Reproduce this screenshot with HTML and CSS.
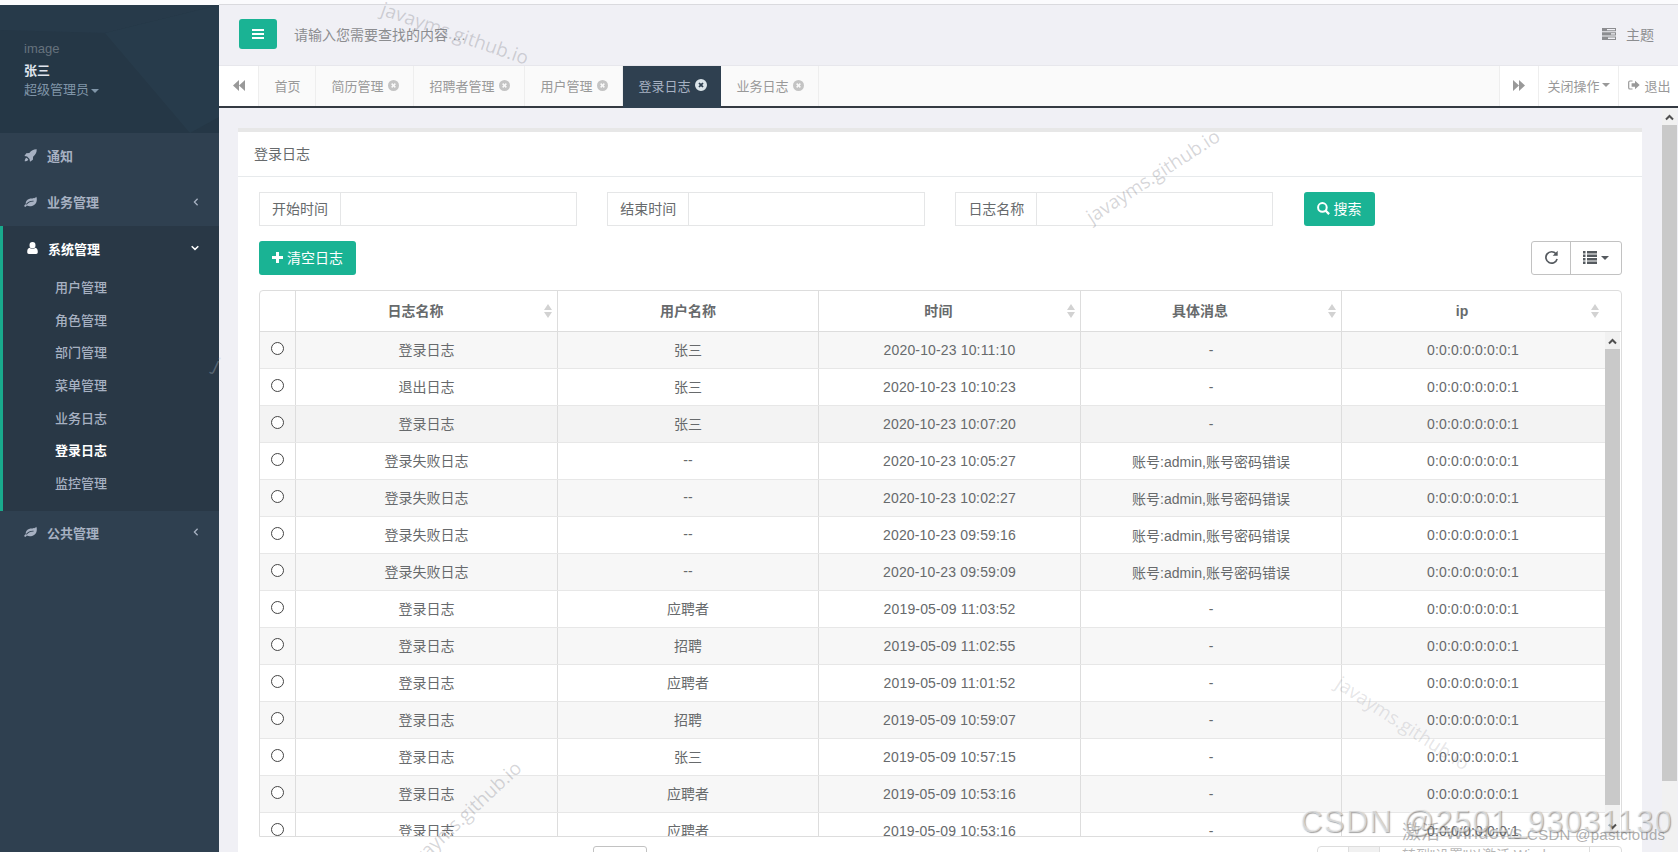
FILE: index.html
```
<!DOCTYPE html>
<html lang="zh-CN">
<head>
    <meta charset="UTF-8">
    <meta name="viewport" content="width=device-width, initial-scale=1.0">
    <title>登录日志</title>
    <link rel="stylesheet" href="styles.css">
</head>
<body>
    <!-- Shared icons -->
    <svg class="icon-defs" width="0" height="0">
        <symbol id="i-leaf" viewBox="0 0 14 12"><path fill-rule="evenodd" d="M13.2.3c.7 1.400.8 3.100.4 4.800-.8 3.600-4 5.500-7.200 5.500-1.300 0-2.300-.3-3.200-.7-.6.400-.9 1.300-1.700 1.400C.9 11.400.3 10.800.3 10.300c0-.9 1.500-1.500 1.600-2.100-.4-2.700 1.300-5.200 4.200-5.800 2.400-.5 5.700.1 7.100-2.100zM3 8.600C5 6.500 7 5.700 9.900 5.500c.7-.1.600-.9 0-.9C6.700 4.500 4.300 5.700 2.400 7.800c-.5.700.1 1.300.6.800z"/></symbol>
        <symbol id="i-close" viewBox="0 0 12 12"><path fill-rule="evenodd" d="M6 0a6 6 0 1 1 0 12A6 6 0 0 1 6 0zM3.400 4.600 4.800 6 3.400 7.400l1.200 1.200L6 7.200l1.400 1.400 1.200-1.200L7.200 6l1.400-1.400-1.200-1.200L6 4.800 4.600 3.400z"/></symbol>
        <symbol id="i-left" viewBox="0 0 6 8"><path d="M4.600.7 1.400 4l3.200 3.300" fill="none" stroke="currentColor" stroke-width="1.300"/></symbol>
        <symbol id="i-down" viewBox="0 0 8 6"><path d="M.7 1.200 4 4.400l3.300-3.200" fill="none" stroke="currentColor" stroke-width="1.500"/></symbol>
        <symbol id="i-sort" viewBox="0 0 8 14"><path d="M4 0 8 6H0zM4 14 0 8h8z"/></symbol>
    </svg>

    <div class="page">
        <!-- Sidebar -->
        <nav class="sidebar">
            <div class="profile">
                <svg class="profile-bg" width="219" height="128"><path d="M0 0H219L105 28 0 25z" fill="#2a3f4f" opacity=".4"/><path d="M105 28 219 0V112L190 128z" fill="#2a3f4f" opacity=".5"/></svg>
                <span class="avatar">image</span>
                <strong>张三</strong>
                <span class="role">超级管理员<i class="caret"></i></span>
            </div>
            <a class="nav-item"><svg class="nav-icon" width="13" height="13" viewBox="0 0 13 13"><path d="M12.700.3c.1 3.200-.9 5.100-3.600 7.500l-.2 3-2.900 1.900-.5-2.700-2.400-2.400L.4 7.100 2.300 4.200l3-.2C7.600 1.300 9.500.2 12.700.3zM2.600 8.700l1.700 1.700c-.6 1.500-2 1.800-3.600 1.900.1-1.600.4-3 1.900-3.600z"/></svg>通知</a>
            <a class="nav-item second"><svg class="nav-icon" width="13" height="12"><use href="#i-leaf"/></svg>业务管理<svg class="arrow" width="6" height="8"><use href="#i-left"/></svg></a>
            <div class="nav-open">
                <a class="nav-item"><svg class="nav-icon" width="11" height="12" viewBox="0 0 11 12"><path d="M5.500 0a3 3.300 0 0 1 0 6.600A3 3.300 0 0 1 5.500 0zM2.700 5.800c1.600 1.700 4 1.700 5.600 0C10 6.100 10.800 7.400 10.800 10c0 1.200-.6 1.900-1.700 1.900H1.900C.8 11.900.2 11.200.2 10c0-2.600.8-3.900 2.500-4.200z"/></svg>系统管理<svg class="arrow" width="8" height="6"><use href="#i-down"/></svg></a>
                <ul>
                    <li>用户管理</li>
                    <li>角色管理</li>
                    <li>部门管理</li>
                    <li>菜单管理</li>
                    <li>业务日志</li>
                    <li class="current">登录日志</li>
                    <li>监控管理</li>
                </ul>
            </div>
            <a class="nav-item last"><svg class="nav-icon" width="13" height="12"><use href="#i-leaf"/></svg>公共管理<svg class="arrow" width="6" height="8"><use href="#i-left"/></svg></a>
        </nav>

        <main class="main">
            <!-- Top bar -->
            <header class="topbar">
                <button class="menu-btn"><svg width="12" height="10" viewBox="0 0 12 10"><path d="M0 0h12v2H0zM0 4h12v2H0zM0 8h12v2H0z"/></svg></button>
                <span class="search-hint">请输入您需要查找的内容 …</span>
                <span class="theme"><svg width="14" height="12" viewBox="0 0 14 12"><path fill-rule="evenodd" d="M0 0h14v3.300H0zM5 1v1.300h8V1zM0 4.300h14v3.300H0zM9 5.300v1.300h4V5.300zM0 8.600h14V12H0zM6 9.600V11h7V9.600z"/></svg>主题</span>
            </header>

            <!-- Tabs -->
            <div class="tabs">
                <span class="tab-roll"><svg width="12" height="11" viewBox="0 0 12 11"><path d="M6 0v11L0 5.500zM12 0v11L6 5.500z"/></svg></span>
                <span class="tab home">首页</span>
                <span class="tab">简历管理<svg width="11" height="11"><use href="#i-close"/></svg></span>
                <span class="tab wide">招聘者管理<svg width="11" height="11"><use href="#i-close"/></svg></span>
                <span class="tab">用户管理<svg width="11" height="11"><use href="#i-close"/></svg></span>
                <span class="tab active">登录日志<svg width="12" height="12"><use href="#i-close"/></svg></span>
                <span class="tab">业务日志<svg width="11" height="11"><use href="#i-close"/></svg></span>
                <span class="tab-roll next"><svg width="12" height="11" viewBox="0 0 12 11"><path d="M0 0v11l6-5.500zM6 0v11l6-5.500z"/></svg></span>
                <span class="tab-op">关闭操作<i class="caret"></i></span>
                <span class="tab-exit"><svg width="12" height="10" viewBox="0 0 12 10"><path d="M4.500 1H2Q.7 1 .7 2.300v5.400Q.7 9 2 9h2.500" fill="none" stroke="currentColor" stroke-width="1.200"/><path d="M7 .8 11.700 5 7 9.200V6.700H3.600V3.300H7z"/></svg>退出</span>
            </div>

            <div class="content">
                <section class="panel">
                    <h5>登录日志</h5>
                    <div class="panel-body">
                        <form class="filters">
                            <label class="field"><span>开始时间</span><input type="text"></label>
                            <label class="field"><span>结束时间</span><input type="text"></label>
                            <label class="field"><span>日志名称</span><input type="text"></label>
                            <button type="button" class="btn search-btn"><svg width="13" height="13" viewBox="0 0 13 13"><path d="m8.500 8.500 3.600 3.600" stroke="currentColor" stroke-width="2.300"/><circle cx="5.400" cy="5.400" r="4.300" fill="none" stroke="currentColor" stroke-width="2"/></svg>搜索</button>
                        </form>
                        <div class="toolbar">
                            <button class="btn clear-btn"><svg width="11" height="11" viewBox="0 0 11 11"><path d="M4 0h3v4h4v3H7v4H4V7H0V4h4z"/></svg>清空日志</button>
                            <div class="tools">
                                <button><svg width="15" height="15" viewBox="0 0 15 15"><path d="M12 3.800A5.700 5.700 0 1 0 13.100 9" fill="none" stroke="currentColor" stroke-width="1.700"/><path d="M13.700.8v5H8.700z"/></svg></button>
                                <button><svg width="14" height="13" viewBox="0 0 14 13"><path d="M0 0h2.500v2.500H0zM4 0h10v2.500H4zM0 3.500h2.500V6H0zM4 3.500h10V6H4zM0 7h2.500v2.500H0zM4 7h10v2.500H4zM0 10.500h2.500V13H0zM4 10.500h10V13H4z"/></svg><i class="caret"></i></button>
                            </div>
                        </div>

                        <!-- Log table -->
                        <div class="log-table">
                            <div class="row head">
                                <span></span>
                                <span>日志名称<svg width="8" height="14"><use href="#i-sort"/></svg></span>
                                <span>用户名称</span>
                                <span>时间<svg width="8" height="14"><use href="#i-sort"/></svg></span>
                                <span>具体消息<svg width="8" height="14"><use href="#i-sort"/></svg></span>
                                <span>ip<svg width="8" height="14"><use href="#i-sort"/></svg></span>
                            </div>
                            <div class="table-body">
                                <div class="rows">
                                    <div class="row"><span><i class="radio"></i></span><span>登录日志</span><span>张三</span><span>2020-10-23 10:11:10</span><span>-</span><span>0:0:0:0:0:0:0:1</span></div>
                                    <div class="row"><span><i class="radio"></i></span><span>退出日志</span><span>张三</span><span>2020-10-23 10:10:23</span><span>-</span><span>0:0:0:0:0:0:0:1</span></div>
                                    <div class="row hover"><span><i class="radio"></i></span><span>登录日志</span><span>张三</span><span>2020-10-23 10:07:20</span><span>-</span><span>0:0:0:0:0:0:0:1</span></div>
                                    <div class="row"><span><i class="radio"></i></span><span>登录失败日志</span><span>--</span><span>2020-10-23 10:05:27</span><span>账号:admin,账号密码错误</span><span>0:0:0:0:0:0:0:1</span></div>
                                    <div class="row"><span><i class="radio"></i></span><span>登录失败日志</span><span>--</span><span>2020-10-23 10:02:27</span><span>账号:admin,账号密码错误</span><span>0:0:0:0:0:0:0:1</span></div>
                                    <div class="row"><span><i class="radio"></i></span><span>登录失败日志</span><span>--</span><span>2020-10-23 09:59:16</span><span>账号:admin,账号密码错误</span><span>0:0:0:0:0:0:0:1</span></div>
                                    <div class="row"><span><i class="radio"></i></span><span>登录失败日志</span><span>--</span><span>2020-10-23 09:59:09</span><span>账号:admin,账号密码错误</span><span>0:0:0:0:0:0:0:1</span></div>
                                    <div class="row"><span><i class="radio"></i></span><span>登录日志</span><span>应聘者</span><span>2019-05-09 11:03:52</span><span>-</span><span>0:0:0:0:0:0:0:1</span></div>
                                    <div class="row"><span><i class="radio"></i></span><span>登录日志</span><span>招聘</span><span>2019-05-09 11:02:55</span><span>-</span><span>0:0:0:0:0:0:0:1</span></div>
                                    <div class="row"><span><i class="radio"></i></span><span>登录日志</span><span>应聘者</span><span>2019-05-09 11:01:52</span><span>-</span><span>0:0:0:0:0:0:0:1</span></div>
                                    <div class="row"><span><i class="radio"></i></span><span>登录日志</span><span>招聘</span><span>2019-05-09 10:59:07</span><span>-</span><span>0:0:0:0:0:0:0:1</span></div>
                                    <div class="row"><span><i class="radio"></i></span><span>登录日志</span><span>张三</span><span>2019-05-09 10:57:15</span><span>-</span><span>0:0:0:0:0:0:0:1</span></div>
                                    <div class="row"><span><i class="radio"></i></span><span>登录日志</span><span>应聘者</span><span>2019-05-09 10:53:16</span><span>-</span><span>0:0:0:0:0:0:0:1</span></div>
                                    <div class="row"><span><i class="radio"></i></span><span>登录日志</span><span>应聘者</span><span>2019-05-09 10:53:16</span><span>-</span><span>0:0:0:0:0:0:0:1</span></div>
                                </div>
                                <div class="scrollbar">
                                    <svg width="9" height="7" viewBox="0 0 9 7"><path d="M1 5.500 4.500 2 8 5.500" fill="none" stroke="currentColor" stroke-width="2"/></svg>
                                    <div class="thumb"></div>
                                    <svg class="scroll-down" width="9" height="7" viewBox="0 0 9 7"><path d="M1 1.500 4.500 5 8 1.500" fill="none" stroke="currentColor" stroke-width="2"/></svg>
                                </div>
                            </div>
                        </div>

                        <div class="pager">
                            <span class="page-size"></span>
                            <span class="pages"><i></i><i class="on"></i><i></i><i></i></span>
                        </div>
                    </div>
                </section>
                <div class="scrollbar outer">
                    <svg width="9" height="7" viewBox="0 0 9 7"><path d="M1 5.500 4.500 2 8 5.500" fill="none" stroke="currentColor" stroke-width="2"/></svg>
                    <div class="thumb"></div>
                </div>
            </div>
        </main>
    </div>

    <!-- Watermarks -->
    <div class="marks">
        <span class="mark m1">javayms.github.io</span>
        <span class="mark m2">javayms.github.io</span>
        <span class="mark m3">javayms.github.io</span>
        <span class="mark m4">javayms.github.io</span>
        <span class="mark m5">j</span>
        <span class="activate">激活 Windows</span>
        <span class="activate-hint">转到"设置"以激活 Windows</span>
        <span class="csdn-small">CSDN @pastclouds</span>
        <span class="csdn">CSDN @2501_93031130</span>
    </div>
</body>
</html>
```
FILE: styles.css
```
/* Global Styles */
* {
    box-sizing: border-box;
}

body {
    margin: 0;
    height: 852px;
    overflow: hidden;
    background: #fff;
    color: #676a6c;
    font-family: "Liberation Sans", "Noto Sans CJK SC", sans-serif;
    font-size: 14px;
}

svg {
    fill: currentColor;
    flex: none;
}

button {
    font-family: inherit;
    font-size: 14px;
    padding: 0;
    display: flex;
    align-items: center;
    justify-content: center;
}

.icon-defs {
    display: none;
}

.page {
    display: flex;
    width: 1678px;
    height: 852px;
    padding-top: 5px;
    background: #fbfbfd;
    overflow: hidden;
}

.caret {
    display: inline-block;
    border-top: 4px solid;
    border-left: 4px solid transparent;
    border-right: 4px solid transparent;
    vertical-align: middle;
    margin-left: 2px;
}

/* Sidebar */
.sidebar {
    width: 219px;
    flex: none;
    background: #2f4050;
    color: #a7b1c2;
    font-size: 13px;
}

.profile {
    position: relative;
    height: 128px;
    padding: 34px 24px 0;
    background: #253746;
    display: flex;
    flex-direction: column;
}

.profile-bg {
    position: absolute;
    left: 0;
    top: 0;
}

.profile > span,
.profile > strong {
    position: relative;
    line-height: 19px;
}

.profile .avatar {
    color: #65727d;
    line-height: 20px;
    height: 22px;
}

.profile strong {
    color: #dfe4ed;
}

.profile .role {
    color: #8095a8;
}

.nav-item {
    display: flex;
    align-items: center;
    height: 46px;
    padding: 0 20px 2px 24px;
    font-weight: 600;
}

.nav-icon {
    margin-right: 10px;
}

.arrow {
    margin-left: auto;
}

.nav-item.second {
    height: 47px;
}

.nav-item.last {
    padding-bottom: 4px;
}

.nav-open {
    height: 285px;
    border-left: 3px solid #19aa8d;
    background: #293846;
}

.nav-open .nav-item {
    height: 46px;
    color: #fff;
}

.nav-open ul {
    list-style: none;
    margin: 0;
    padding: 0 0 0 52px;
}

.nav-open li {
    height: 32.7px;
    line-height: 32.7px;
    font-weight: 500;
}

.nav-open .current {
    color: #fff;
    font-weight: 600;
}

/* Top bar */
.main {
    flex: 1;
    min-width: 0;
    display: flex;
    flex-direction: column;
    background: #f0f0f5;
    border-top: 1px solid #dadade;
    margin-top: -1px;
}

.topbar {
    display: flex;
    align-items: center;
    height: 61px;
    padding: 0 24px 2px 20px;
    border-bottom: 1px solid #e7e7ec;
    color: #8c8d90;
}

.menu-btn {
    width: 38px;
    height: 30px;
    border: 0;
    border-radius: 3px;
    background: #1ab394;
    color: #fff;
}

.search-hint {
    margin-left: 17px;
}

.theme {
    margin-left: auto;
    display: flex;
    align-items: center;
    gap: 10px;
}

/* Tabs */
.tabs {
    display: flex;
    height: 42px;
    border-bottom: 2px solid #343a42;
    background: #fafafa;
    color: #999;
    font-size: 13px;
}

.tabs > span {
    display: flex;
    align-items: center;
    justify-content: center;
    padding-bottom: 2px;
    border-right: 1px solid #eee;
}

.tab-roll {
    width: 40px;
    background: #fff;
}

.tab-roll.next {
    margin-left: auto;
    border-left: 1px solid #eee;
}

.tab {
    width: 98px;
    gap: 4px;
}

.tab svg {
    color: #c4c4c4;
}

.tabs .tab {
    padding-left: 1px;
}

.tab.home {
    width: 57px;
}

.tab.wide {
    width: 111px;
}

.tabs .active {
    background: #2f4050;
    color: #a7b1c2;
    height: 42px;
    padding-bottom: 4px;
    border: 0;
}

.tab.active svg {
    color: #dce5ea;
}

.tab-op {
    width: 80px;
    background: #fff;
}

.tabs .tab-exit {
    width: 59px;
    padding-left: 2px;
    background: #fff;
    border: 0;
    gap: 4px;
}

/* Content */
.content {
    flex: 1;
    display: flex;
    min-height: 0;
}

.panel {
    width: 1404px;
    margin: 20px 20px 0 19px;
    border-top: 4px solid #e7e7e7;
    background: #fff;
}

.panel h5 {
    height: 45px;
    margin: 0;
    padding: 0 16px;
    border-bottom: 1px solid #e7eaec;
    line-height: 44px;
    font-size: 14px;
    font-weight: 400;
}

.panel-body {
    padding: 15px 20px 0 21px;
}

.filters {
    display: flex;
    height: 34px;
}

.field {
    display: flex;
    width: 318px;
    margin-right: 30.2px;
    border: 1px solid #e5e6e7;
}

.field span {
    width: 81px;
    flex: none;
    text-align: center;
    line-height: 32px;
    border-right: 1px solid #e5e6e7;
}

.field input {
    flex: 1;
    min-width: 0;
    border: 0;
    background: none;
}

.btn {
    height: 34px;
    padding-bottom: 2px;
    border: 0;
    border-radius: 3px;
    background: #1ab394;
    color: #fff;
    gap: 4px;
}

.search-btn {
    width: 71px;
}

.clear-btn {
    width: 97px;
}

.toolbar {
    display: flex;
    justify-content: space-between;
    margin: 15px 0;
}

.tools {
    display: flex;
    width: 91px;
    height: 34px;
    border: 1px solid #c2c2c2;
    border-radius: 3px;
}

.tools button {
    width: 39px;
    padding-bottom: 2px;
    border: 0;
    border-right: 1px solid #c2c2c2;
    background: none;
    color: #555a5f;
}

.tools button:last-child {
    flex: 1;
    border-right: 0;
}

.tools .caret {
    margin-left: 4px;
    margin-top: 2px;
}

/* Log table */
.log-table {
    height: 547px;
    border: 1px solid #ddd;
    border-radius: 4px 4px 0 0;
    overflow: hidden;
}

.row {
    display: grid;
    grid-template-columns: 36px 262px 261px 262px 261px 262px;
    height: 37px;
    border-bottom: 1px solid #e7e7e7;
}

.row span {
    display: flex;
    align-items: center;
    justify-content: center;
    border-right: 1px solid #ddd;
}

.row span:nth-child(2),
.row span:nth-child(3) {
    padding-bottom: 2px;
}

.row span:nth-child(4),
.rows span:nth-child(6) {
    letter-spacing: 0.15px;
}

.row span:last-child {
    border-right: 0;
}

.row.head {
    height: 41px;
    border-bottom: 1px solid #ddd;
    font-weight: bold;
}

.head span {
    position: relative;
    padding-right: 22px;
    padding-bottom: 2px;
}

.head span:nth-child(3) {
    padding-right: 0;
}

.head span:last-child {
    padding-bottom: 0;
}

.head svg {
    position: absolute;
    right: 5px;
    top: 13px;
    color: #d2d2d2;
}

.table-body {
    display: flex;
    height: 504px;
}

.rows {
    width: 1345px;
    overflow: hidden;
}

.rows .row:nth-child(odd) {
    background: #f7f7f7;
}

.rows .row.hover {
    background: #f3f3f3;
}

.rows .radio {
    width: 13px;
    height: 13px;
    border: 1px solid #444;
    border-radius: 50%;
    background: #fff;
    margin-bottom: 3px;
}

/* Scrollbars */
.scrollbar {
    width: 15px;
    display: flex;
    flex-direction: column;
    align-items: center;
    padding-top: 6px;
    background: #f1f1f1;
    color: #505050;
}

.scrollbar .thumb {
    width: 15px;
    height: 456px;
    margin-top: 4px;
    background: #c9c9c9;
}

.scrollbar .scroll-down {
    margin-top: 18px;
}

.scrollbar.outer .thumb {
    height: 656px;
    margin-top: 4px;
}

/* Pager */
.pager {
    display: flex;
    justify-content: space-between;
    padding: 9px 0 0 334px;
}

.page-size {
    width: 54px;
    height: 30px;
    border: 1px solid #c2c2c2;
    border-radius: 3px;
}

.pages {
    display: flex;
    width: 305px;
    height: 30px;
    border: 1px solid #ddd;
    border-radius: 4px;
}

.pages i {
    width: 31px;
    border-right: 1px solid #ddd;
}

.pages .on {
    background: #f1f1f1;
}

.pages i:nth-child(3) {
    flex: 1;
}

.pages i:last-child {
    border: 0;
}

/* Watermarks */
.marks {
    position: absolute;
    left: 0;
    top: 0;
    width: 1680px;
    height: 852px;
    overflow: hidden;
    pointer-events: none;
}

.marks span {
    position: absolute;
    white-space: nowrap;
}

.mark {
    font-family: "Open Sans", "Noto Sans", sans-serif;
    font-size: 19px;
    line-height: 24px;
    color: rgba(110, 110, 120, 0.28);
    transform-origin: left center;
}

.m1 {
    left: 382px;
    top: -4px;
    transform: rotate(19deg);
}

.m2 {
    left: 1088px;
    top: 206px;
    transform: rotate(-33deg);
}

.m3 {
    left: 405px;
    top: 858px;
    transform: rotate(-43deg);
}

.m4 {
    left: 1338px;
    top: 669px;
    transform: rotate(33deg);
    color: rgba(110, 110, 120, 0.18);
}

.m5 {
    left: 215px;
    top: 351px;
    transform: rotate(25deg);
    color: rgba(180, 190, 200, 0.35);
}

.activate {
    left: 1402px;
    top: 817px;
    font-size: 19px;
    color: rgba(110, 110, 110, 0.5);
}

.activate-hint {
    left: 1402px;
    top: 844px;
    font-size: 14px;
    color: rgba(110, 110, 110, 0.5);
}

.csdn-small {
    left: 1527px;
    top: 826px;
    font-size: 15px;
    letter-spacing: 0.3px;
    color: rgba(110, 110, 110, 0.55);
}

.csdn {
    left: 1300px;
    top: 804px;
    font-size: 31px;
    line-height: 36px;
    letter-spacing: 1.2px;
    color: rgba(255, 255, 255, 0.55);
    text-shadow: 1px 1px 1px rgba(90, 90, 90, 0.55);
}
```
